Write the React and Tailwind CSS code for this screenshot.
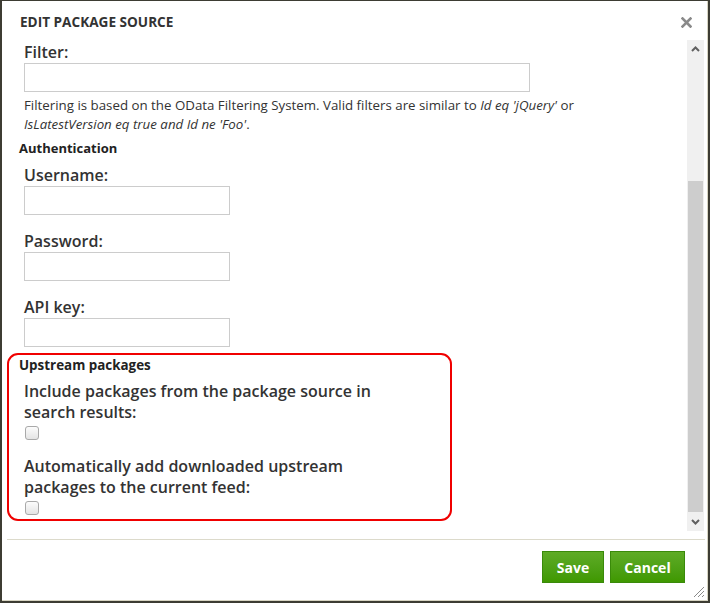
import React from 'react';

const FONT = { fontFamily: '"Open Sans", "Noto Sans", sans-serif' };

function Field({ label, wide }) {
  return (
    <div className="pl-[17px]">
      <div className="text-[16px] leading-[20px] font-semibold text-[#333]">{label}</div>
      <div className={`${wide ? 'w-[506px]' : 'w-[206px]'} h-[29px] border border-[#ccc] bg-white mt-px`} />
    </div>
  );
}

function Checkbox() {
  return (
    <div className="ml-[19px] w-[14px] h-[14px] rounded-[3px] border border-[#a9a9a9] bg-gradient-to-b from-[#fcfcfc] to-[#e4e4e4]" />
  );
}

export default function App() {
  return (
    <div className="w-[710px] h-[603px] bg-[#3d3c33] pt-px pl-[2px]" style={FONT}>
      <div className="w-[706px] h-[600px] bg-white border-r border-b border-[#d8d5c3] flex flex-col">
        {/* Header */}
        <div className="h-[39px] flex items-center justify-between pl-[18px] pr-[15px] pt-[4px]">
          <div className="text-[13.6px] font-bold text-[#333]">EDIT PACKAGE SOURCE</div>
          <svg width="11" height="11" viewBox="0 0 11 11">
            <path d="M1.5 1.5 L9.5 9.5 M9.5 1.5 L1.5 9.5" stroke="#8a8a8a" strokeWidth="2.6" strokeLinecap="square" />
          </svg>
        </div>

        {/* Body with scrollbar */}
        <div className="flex h-[491px]">
          <div className="flex-1 overflow-hidden pl-[5px] pt-[2px]">
            <Field label="Filter:" wide />
            <div className="pl-[17px] text-[13.3px] leading-[19px] text-[#333] mt-[4px]">
              Filtering is based on the OData Filtering System. Valid filters are similar to <i>Id eq 'jQuery'</i> or
              <br />
              <i>IsLatestVersion eq true and Id ne 'Foo'</i>.
            </div>
            <div className="pl-[12px] text-[13px] leading-[18px] font-bold text-[#222] mt-[5px]">Authentication</div>
            <div className="mt-[8px] flex flex-col gap-[16px]">
              <Field label="Username:" />
              <Field label="Password:" />
              <Field label="API key:" />
            </div>
            <div className="mt-[6px] w-[445px] h-[168px] border-2 border-[#f00000] rounded-[11px] pl-[10px] pt-px">
              <div className="text-[13.4px] leading-[18px] font-bold text-[#222]">Upstream packages</div>
              <div className="pl-[5px] mt-[7px] text-[16px] leading-[21px] font-semibold text-[#333]">
                Include packages from the package source in
                <br />
                search results:
              </div>
              <div className="-ml-[13px] mt-[3px]"><Checkbox /></div>
              <div className="pl-[5px] mt-[16px] text-[16px] leading-[21px] font-semibold text-[#333]">
                Automatically add downloaded upstream
                <br />
                packages to the current feed:
              </div>
              <div className="-ml-[13px] mt-[3px]"><Checkbox /></div>
            </div>
          </div>
          <div className="w-[17px] mr-[3px] bg-[#f0f0f0] flex flex-col items-center">
            <div className="h-[17px] flex items-center justify-center">
              <svg width="9" height="6" viewBox="0 0 9 6">
                <path d="M1 5 L4.5 1.5 L8 5" stroke="#606060" strokeWidth="2" fill="none" />
              </svg>
            </div>
            <div className="h-[124px]" />
            <div className="w-[15px] h-[331px] bg-[#cdcdcd]" />
            <div className="flex-1 flex items-center justify-center">
              <svg width="9" height="6" viewBox="0 0 9 6">
                <path d="M1 1 L4.5 4.5 L8 1" stroke="#606060" strokeWidth="2" fill="none" />
              </svg>
            </div>
          </div>
        </div>

        {/* Footer */}
        <div className="mt-[8px] ml-[5px] mr-[2px] border-t border-[#dcdacb]" />
        <div className="flex justify-end gap-[6px] pr-[22px] pt-[11px]">
          <button className="w-[62px] h-[32px] border border-[#3a8a0a] bg-gradient-to-b from-[#5eab25] to-[#3f9800] text-white text-[14px] font-bold">Save</button>
          <button className="w-[75px] h-[32px] border border-[#3a8a0a] bg-gradient-to-b from-[#5eab25] to-[#3f9800] text-white text-[14px] font-bold">Cancel</button>
        </div>
        <div className="flex-1 flex items-end justify-end pr-[2px] pb-[2px]">
          <svg width="12" height="12" viewBox="0 0 12 12">
            <path d="M11 1 L1 11 M11 5 L5 11 M11 9 L9 11" stroke="#8a8a8a" strokeWidth="1" />
          </svg>
        </div>
      </div>
    </div>
  );
}
